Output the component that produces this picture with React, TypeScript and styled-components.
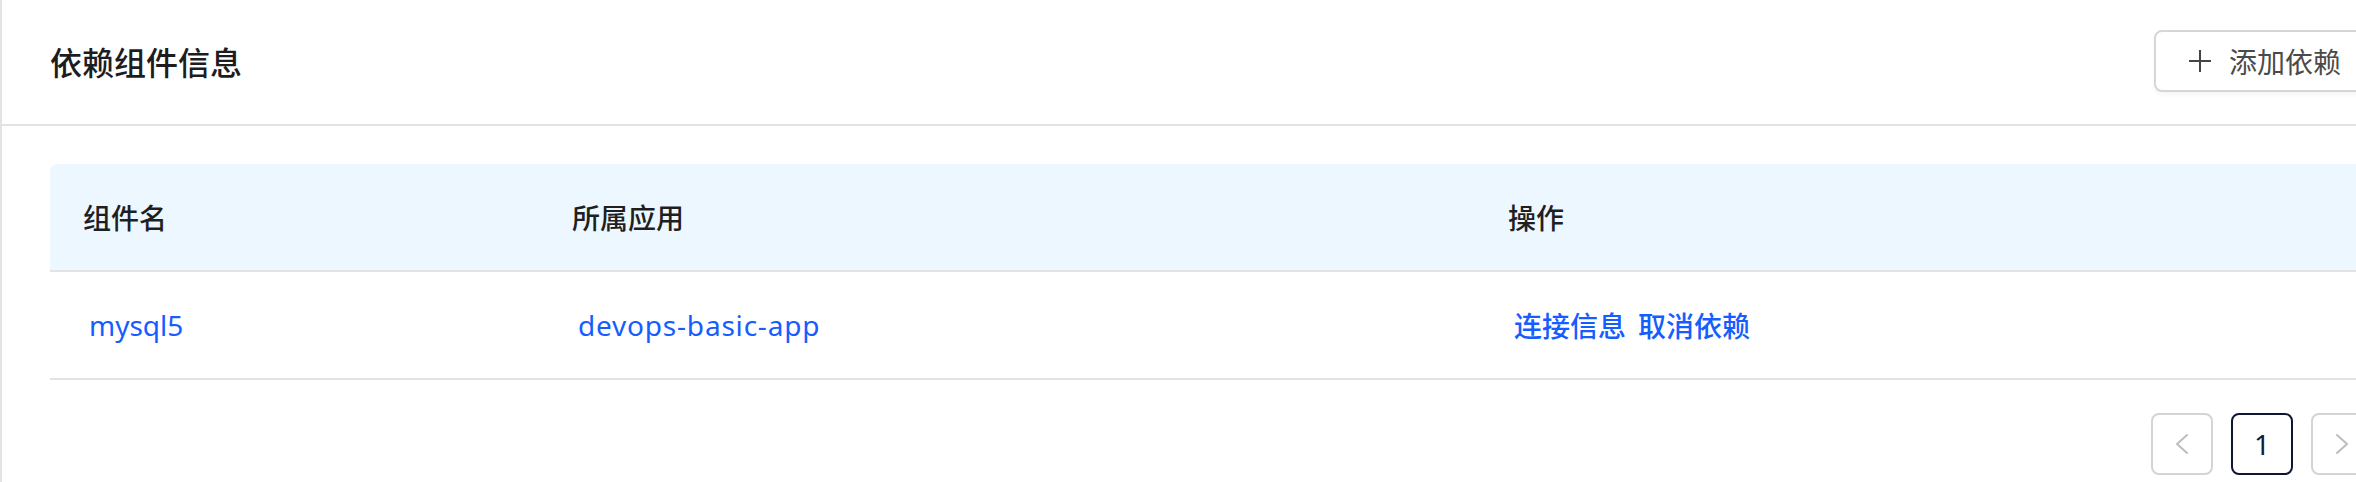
import React from "react";
import styled, { createGlobalStyle } from "styled-components";

const GlobalStyle = createGlobalStyle`
  html, body {
    margin: 0;
    padding: 0;
    background: #ffffff;
    overflow: hidden;
  }
  body {
    font-family: "Noto Sans", "Noto Sans CJK SC", sans-serif;
  }
  * { box-sizing: border-box; }
`;

const Panel = styled.section`
  width: 2424px;
  min-height: 482px;
  border-left: 2px solid #e3e3e3;
  background: #ffffff;
`;

const PanelHeader = styled.header`
  height: 126px;
  display: flex;
  align-items: center;
  justify-content: space-between;
  padding: 0 49px 2px 48px;
  border-bottom: 2px solid #e3e3e3;
`;

const Title = styled.h2`
  margin: 0;
  font-family: "Noto Sans CJK SC", sans-serif;
  font-size: 32px;
  font-weight: 500;
  color: #1d1d1f;
  line-height: 1;
`;

const AddButton = styled.button`
  height: 62px;
  display: flex;
  align-items: center;
  gap: 18px;
  padding: 0 32px 0 33px;
  border: 2px solid #d6d6d6;
  border-radius: 8px;
  background: #ffffff;
  box-shadow: 0 3px 4px rgba(0, 0, 0, 0.04);
  font-family: "Noto Sans CJK SC", sans-serif;
  font-size: 28px;
  color: #4a4a4a;
  cursor: pointer;
`;

const Body = styled.div`
  padding: 38px 50px 0 48px;
`;

const Table = styled.div`
  width: 2324px;
`;

const Row = styled.div<{ $head?: boolean }>`
  display: grid;
  grid-template-columns: 489px 936px 899px;
  height: 108px;
  align-items: center;
  border-bottom: 2px solid #e3e3e3;
  background: ${(p) => (p.$head ? "#edf7ff" : "#ffffff")};
  border-radius: ${(p) => (p.$head ? "8px 8px 0 0" : "0")};
`;

const HeadCell = styled.div`
  padding-left: 33px;
  font-family: "Noto Sans CJK SC", sans-serif;
  font-size: 28px;
  font-weight: 500;
  color: #1f1f1f;
`;

const Cell = styled.div`
  padding-left: 39px;
  display: flex;
  gap: 12px;
`;

const Link = styled.a<{ $spaced?: boolean }>`
  font-family: "Noto Sans", "Noto Sans CJK SC", sans-serif;
  font-size: 28px;
  font-weight: 400;
  letter-spacing: ${(p) => (p.$spaced ? "0.8px" : "0")};
  color: #165dff;
  text-decoration: none;
  cursor: pointer;
`;

const ActionLink = styled(Link)`
  font-family: "Noto Sans CJK SC", sans-serif;
  font-weight: 500;
`;

const Pager = styled.nav`
  display: flex;
  justify-content: flex-end;
  gap: 18px;
  margin-top: 33px;
  width: 2323px;
`;

const PageBox = styled.button<{ $active?: boolean; $disabled?: boolean }>`
  width: 62px;
  height: 62px;
  display: flex;
  align-items: center;
  justify-content: center;
  border: 2px solid ${(p) => (p.$active ? "#0e1633" : "#d4d4d4")};
  border-radius: 8px;
  background: #ffffff;
  font-family: "Noto Sans", sans-serif;
  font-size: 28px;
  color: #141a33;
  padding: 0;
  cursor: ${(p) => (p.$disabled ? "not-allowed" : "pointer")};
`;

const PlusIcon = () => (
  <svg width="22" height="22" viewBox="0 0 22 22" fill="none">
    <path d="M11 0 V22 M0 11 H22" stroke="#444" strokeWidth="2" />
  </svg>
);

const Chevron = ({ dir }: { dir: "left" | "right" }) => (
  <svg width="14" height="22" viewBox="0 0 14 22" fill="none">
    <path
      d={dir === "left" ? "M12 2 L2 11 L12 20" : "M2 2 L12 11 L2 20"}
      stroke="#bdbdbd"
      strokeWidth="2"
      strokeLinecap="round"
      strokeLinejoin="round"
    />
  </svg>
);

const rows = [{ name: "mysql5", app: "devops-basic-app" }];

export default function App() {
  return (
    <>
      <GlobalStyle />
      <Panel>
        <PanelHeader>
          <Title>依赖组件信息</Title>
          <AddButton>
            <PlusIcon />
            添加依赖
          </AddButton>
        </PanelHeader>
        <Body>
          <Table>
            <Row $head>
              <HeadCell>组件名</HeadCell>
              <HeadCell>所属应用</HeadCell>
              <HeadCell>操作</HeadCell>
            </Row>
            {rows.map((r) => (
              <Row key={r.name}>
                <Cell>
                  <Link>{r.name}</Link>
                </Cell>
                <Cell>
                  <Link $spaced>{r.app}</Link>
                </Cell>
                <Cell>
                  <ActionLink>连接信息</ActionLink>
                  <ActionLink>取消依赖</ActionLink>
                </Cell>
              </Row>
            ))}
          </Table>
          <Pager>
            <PageBox $disabled>
              <Chevron dir="left" />
            </PageBox>
            <PageBox $active>1</PageBox>
            <PageBox>
              <Chevron dir="right" />
            </PageBox>
          </Pager>
        </Body>
      </Panel>
    </>
  );
}
